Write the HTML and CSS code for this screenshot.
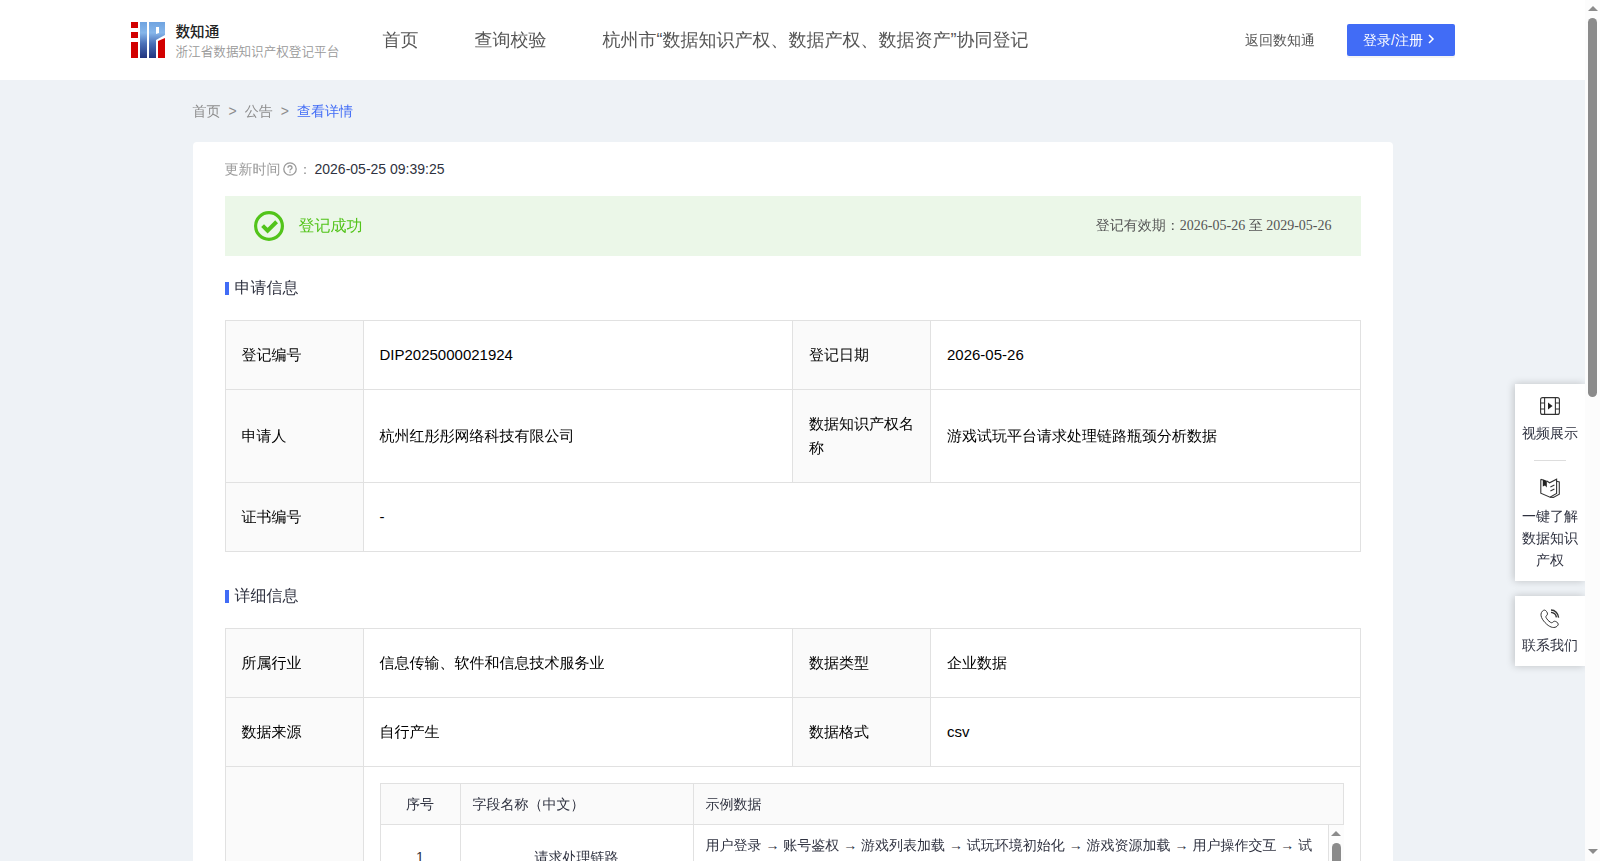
FILE: index.html
```
<!DOCTYPE html>
<html lang="zh-CN">
<head>
    <meta charset="UTF-8">
    <meta name="viewport" content="width=device-width, initial-scale=1.0">
    <title>数知通</title>
    <link rel="stylesheet" href="styles.css">
</head>
<body>
    <div class="page">
        <header class="header">
            <div class="logo">
                <svg class="logo-mark" width="34" height="36" viewBox="0 0 34 36">
                    <defs>
                        <linearGradient id="blue" x1="0" y1="0" x2="0" y2="1">
                            <stop offset="0" stop-color="#6fa3e0"/>
                            <stop offset="0.3" stop-color="#86b6ea"/>
                            <stop offset="0.6" stop-color="#4a70b8"/>
                            <stop offset="1" stop-color="#22357f"/>
                        </linearGradient>
                    </defs>
                    <path fill="#d20000" d="M0 0h7v6H0zM0 10h7v6H0zM0 20h7v16H0zM27 19l7-3v20h-7z"/>
                    <path fill="url(#blue)" d="M9 0h7v36H9zM18 0h16v13l-9 5v18h-7zM25 5v7l3-1V5z" fill-rule="evenodd"/>
                </svg>
                <div class="logo-text">
                    <div class="logo-name">数知通</div>
                    <div class="logo-sub">浙江省数据知识产权登记平台</div>
                </div>
            </div>
            <nav class="nav">
                <a>首页</a>
                <a>查询校验</a>
                <a>杭州市“数据知识产权、数据产权、数据资产”协同登记</a>
            </nav>
            <a class="back">返回数知通</a>
            <button class="login">登录/注册<svg width="14" height="14" viewBox="0 0 14 14"><path d="M5 3l4 4-4 4" fill="none" stroke="#fff" stroke-width="1.5"/></svg></button>
        </header>

        <main class="main">
            <div class="breadcrumb">
                <span>首页</span><i>&gt;</i><span>公告</span><i>&gt;</i><span class="current">查看详情</span>
            </div>

            <div class="card">
                <div class="update">
                    <span>更新时间</span>
                    <svg width="14" height="14" viewBox="0 0 14 14" fill="none" stroke="#999" stroke-width="1.3">
                        <circle cx="7" cy="7" r="6.2"/>
                        <path d="M5 5.7c0-2.6 4-2.6 4 0C9 7 7 7 7 8.6"/>
                        <path d="M7 9.6v1.2"/>
                    </svg>
                    <span class="colon">：</span>
                    <span class="time">2026-05-25 09:39:25</span>
                </div>

                <div class="status">
                    <svg width="30" height="30" viewBox="0 0 30 30" fill="none" stroke="#52c41a">
                        <circle cx="15" cy="15" r="13.4" stroke-width="3.2"/>
                        <path d="M8.6 14.6l5 5 9-8.8" stroke-width="4"/>
                    </svg>
                    <span class="status-text">登记成功</span>
                    <span class="valid">登记有效期：2026-05-26 至 2029-05-26</span>
                </div>

                <h2 class="title">申请信息</h2>
                <table class="info">
                    <colgroup><col class="c-label"><col class="c-value"><col class="c-label"><col></colgroup>
                    <tr><th>登记编号</th><td>DIP2025000021924</td><th>登记日期</th><td>2026-05-26</td></tr>
                    <tr class="tall"><th>申请人</th><td>杭州红彤彤网络科技有限公司</td><th>数据知识产权名称</th><td>游戏试玩平台请求处理链路瓶颈分析数据</td></tr>
                    <tr><th>证书编号</th><td colspan="3">-</td></tr>
                </table>

                <h2 class="title second">详细信息</h2>
                <table class="info">
                    <colgroup><col class="c-label"><col class="c-value"><col class="c-label"><col></colgroup>
                    <tr><th>所属行业</th><td>信息传输、软件和信息技术服务业</td><th>数据类型</th><td>企业数据</td></tr>
                    <tr><th>数据来源</th><td>自行产生</td><th>数据格式</th><td>csv</td></tr>
                    <tr>
                        <th></th>
                        <td colspan="3" class="nested">
                            <div class="fields">
                                <div class="row head">
                                    <div class="num">序号</div>
                                    <div class="name">字段名称（中文）</div>
                                    <div class="sample">示例数据</div>
                                </div>
                                <div class="row line">
                                    <div class="num">1</div>
                                    <div class="name">请求处理链路</div>
                                    <div class="sample">用户登录 → 账号鉴权 → 游戏列表加载 → 试玩环境初始化 → 游戏资源加载 → 用户操作交互 → 试</div>
                                    <div class="scroll inner"><b class="up"></b><b class="thumb"></b></div>
                                </div>
                            </div>
                        </td>
                    </tr>
                </table>
            </div>
        </main>
    </div>

    <aside class="side">
        <div class="side-box">
            <div class="side-item">
                <svg width="20" height="18" viewBox="0 0 20 18" fill="none" stroke="#333" stroke-width="1.1">
                    <rect x="0.6" y="0.6" width="18.8" height="16.8" rx="2"/>
                    <path d="M4.6 .6v16.8M15.4 .6v16.8M.6 6h4M.6 12h4M15.4 6h4M15.4 12h4"/>
                    <path d="M8 5.4v7.2L12.6 9z" fill="#222" stroke="none"/>
                </svg>
                <span>视频展示</span>
            </div>
            <div class="side-line"></div>
            <div class="side-item guide">
                <svg width="20" height="20" viewBox="0 0 20 20" fill="none" stroke="#333" stroke-width="1.1">
                    <path d="M.8 1.2v14L10 19.2l6.6-3.8V1.2L9.6 4.8 6.8 3M.8 1.2L3 2"/>
                    <path d="M16.6 3.2l2.7.8v12.2L13.4 19.4l-3.4-.2"/>
                    <path d="M2.8 1.2l4 1.6v6.8L5 7.6 2.8 8.4z" fill="#222" stroke="none"/>
                    <path d="M10.4 9l4-2M10.4 13l4-2"/>
                </svg>
                <span>一键了解数据知识产权</span>
            </div>
        </div>
        <div class="side-box contact">
            <div class="side-item">
                <svg width="20" height="20" viewBox="0 0 20 20" fill="none" stroke="#333" stroke-width="1">
                    <path d="M2.4 2.2C4 .6 5.4 .8 6.6 2.6c1.3 2 1.2 2.8-.2 4.2-.8.8-.6 1.4 0 2.4.9 1.6 2.3 3 3.9 4 1 .6 1.7.8 2.5 0 1.300-1.300 2.300-1.300 4.100 0 1.800 1.300 1.800 2.500.2 4-2.400 2.200-6.400 1.600-10.400-2C2.200 11.200-1 5.600 2.400 2.200z"/>
                    <path d="M11 1c4 0 7.300 3.200 7.600 7.600M11 3.400c3 .2 5 2.200 5.400 5" stroke-width="1.4"/>
                </svg>
                <span>联系我们</span>
            </div>
        </div>
    </aside>

    <div class="scroll outer"><b class="up"></b><b class="thumb"></b><b class="down"></b></div>
</body>
</html>
```
FILE: styles.css
```
* {
    box-sizing: border-box;
}

body {
    margin: 0;
    height: 861px;
    overflow: hidden;
    display: flex;
    background: #eef2f6;
    color: #2f3240;
    font-family: "Liberation Sans", "WenQuanYi Zen Hei", "Noto Sans CJK SC", sans-serif;
    font-size: 14px;
    line-height: 22px;
}

.page {
    width: 1585px;
    height: 861px;
    overflow: hidden;
}

.header {
    height: 80px;
    padding: 0 130px 0 131px;
    background: #fff;
    display: flex;
    align-items: center;
    color: #555;
}

.logo {
    display: flex;
    align-items: center;
    width: 223px;
    font-family: "Noto Sans CJK SC", sans-serif;
}

.logo-text {
    margin-left: 10.5px;
}

.logo-name {
    color: #222;
    font-size: 14.6px;
    font-weight: 500;
    line-height: 22px;
}

.logo-sub {
    color: #999;
    font-size: 12.6px;
    font-weight: 350;
    line-height: 18px;
    white-space: nowrap;
}

.nav {
    display: flex;
    font-size: 18px;
}

.nav a {
    padding: 0 28px;
    white-space: nowrap;
}

.nav a:first-child {
    padding-left: 28.5px;
}

.back {
    margin-left: auto;
    margin-right: 32px;
}

.login {
    width: 108px;
    height: 32px;
    padding: 0 0 0 16px;
    border: 0;
    border-radius: 2px;
    background: #416cf6;
    box-shadow: 0 2px 0 rgba(0, 0, 0, 0.045);
    color: #fff;
    font: inherit;
    display: flex;
    align-items: center;
}

.login svg {
    margin-left: 1px;
    margin-top: -2px;
}

.main {
    width: 1200px;
    margin: 0 auto;
}

.breadcrumb {
    height: 62px;
    line-height: 62px;
    color: #8c8c8c;
}

.breadcrumb i {
    font-style: normal;
    margin: 0 8px;
}

.breadcrumb .current {
    color: #416cf6;
}

.card {
    height: 760px;
    padding: 0 32px;
    background: #fff;
    border-radius: 4px;
}

.update {
    height: 54px;
    display: flex;
    align-items: center;
    color: #999;
}

.update svg {
    margin-left: 2px;
}

.update .colon {
    margin-left: 1.5px;
}

.update .time {
    margin-left: 2.5px;
    color: #2f3240;
}

.status {
    height: 60px;
    padding: 0 29px;
    display: flex;
    align-items: center;
    background: #ebf7e8;
}

.status-text {
    margin-left: 15px;
    font-size: 16px;
    color: #52c41a;
}

.valid {
    margin-left: auto;
    font-family: "Liberation Serif", "WenQuanYi Zen Hei", "Noto Sans CJK SC", serif;
    color: #555;
}

.title {
    height: 64px;
    margin: 0;
    display: flex;
    align-items: center;
    font-size: 16px;
    font-weight: 400;
}

.title::before {
    content: "";
    width: 4px;
    height: 13px;
    margin-right: 6px;
    margin-top: 1px;
    background: #416cf6;
}

.title.second {
    height: 76px;
    padding-top: 12px;
}

.info {
    width: 1136px;
    table-layout: fixed;
    border-collapse: separate;
    border-spacing: 0;
    border: solid #e1e1e1;
    border-width: 1px 0 0 1px;
    font-size: 15px;
    line-height: 24px;
    color: #000;
}

.c-label {
    width: 138px;
}

.c-value {
    width: 429px;
}

.info tr {
    height: 69px;
}

.info tr.tall {
    height: 93px;
}

.info th,
.info td {
    padding: 0 15px 0 16px;
    border: solid #e1e1e1;
    border-width: 0 1px 1px 0;
    text-align: left;
    font-weight: 400;
}

.info th:nth-child(n+3),
.info td:nth-child(n+3) {
    padding-left: 16.5px;
}

.info th {
    background: #fafafa;
}

.info .nested {
    padding: 16px;
}

.fields {
    width: 964px;
    border: solid #e1e1e1;
    border-width: 1px 0 0 1px;
    font-size: 14px;
    line-height: 22px;
    color: #2f3240;
}

.row {
    display: flex;
}

.row > div {
    border: solid #e1e1e1;
    border-width: 0 1px 1px 0;
    display: flex;
    align-items: center;
    padding: 0 12px;
}

.row .num {
    width: 80px;
    justify-content: center;
}

.row .name {
    width: 233px;
}

.row .sample {
    flex: 1;
    white-space: nowrap;
}

.head {
    height: 41px;
    background: #fafafa;
}

.line {
    height: 65px;
}

.line .name {
    justify-content: center;
}

.line .sample {
    padding-top: 9px;
    align-items: flex-start;
}

/* scrollbars */
.scroll {
    width: 15px;
    flex: none;
    background: #fcfcfc;
    display: flex;
    flex-direction: column;
    align-items: center;
}

.scroll b {
    flex: none;
}

.scroll .up,
.scroll .down {
    border: solid transparent;
    border-width: 0 5px 5px;
    border-bottom-color: #8b8b8b;
}

.scroll .down {
    border-width: 5px 5px 0;
    border-top-color: #8b8b8b;
    margin-top: auto;
    margin-bottom: 7px;
}

.scroll .thumb {
    width: 9px;
    margin-top: 7px;
    border-radius: 5px;
    background: #8b8b8b;
}

.outer {
    position: relative;
    height: 861px;
    padding-top: 6px;
}

.outer .thumb {
    height: 379px;
}

.row > .inner {
    padding: 6px 0 0;
    border: 0;
}

.inner .thumb {
    height: 30px;
}

/* floating tools */
.side {
    position: absolute;
    top: 384px;
    left: 1515px;
    width: 70px;
}

.side-box {
    height: 197px;
    padding-top: 13px;
    background: #fff;
    box-shadow: -1px 0 8px rgba(0, 0, 0, 0.2);
}

.side-item {
    display: flex;
    flex-direction: column;
    align-items: center;
    padding: 0 7px;
    text-align: center;
}

.side-item span {
    margin-top: 7px;
}

.side-line {
    width: 32px;
    height: 1px;
    margin: 16px auto 17px;
    background: #ddd;
}

.side-box.contact {
    height: 70px;
    margin-top: 15px;
    padding-top: 13px;
}

.contact .side-item span {
    margin-top: 5px;
}
```
